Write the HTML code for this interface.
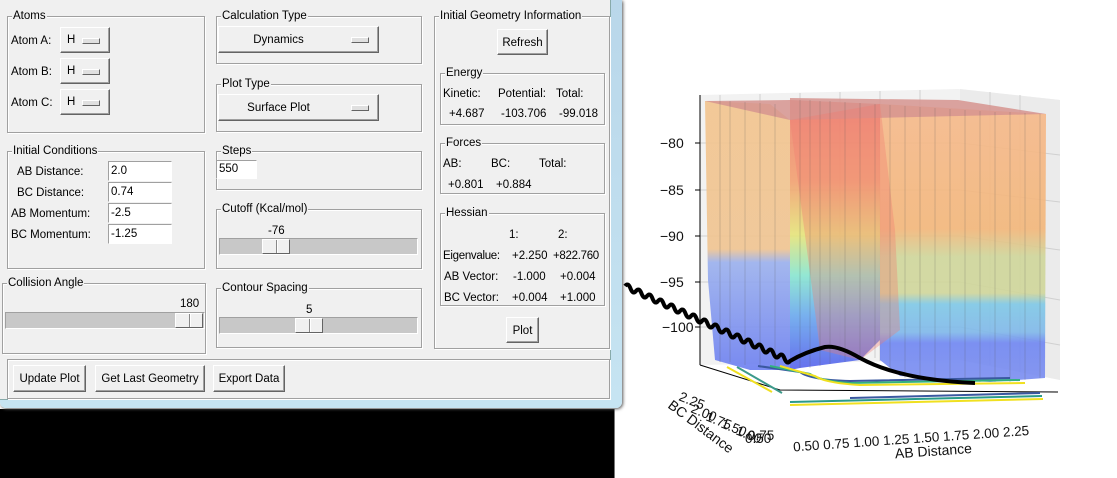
<!DOCTYPE html>
<html><head><meta charset="utf-8"><style>
*{margin:0;padding:0;box-sizing:border-box}
body{width:1117px;height:478px;background:#fff;position:relative;overflow:hidden;font-family:"Liberation Sans",sans-serif;font-size:11.5px;color:#000}
.a{position:absolute;white-space:nowrap;margin-top:2px}
#win{position:absolute;left:0;top:0;width:622px;height:408px;background:linear-gradient(#b9d7ea,#c6e4f2);border-radius:0 0 6px 6px;box-shadow:1px 1px 3px #555}
#client{position:absolute;left:0;top:0;width:611px;height:400px;background:#f0f0f0;border-right:1px solid #8aa;border-bottom:1px solid #8aa}
.g{position:absolute;border:1px solid #a0a0a0;box-shadow:inset 1px 1px 0 #fff,1px 1px 0 #fff}
.gl{position:absolute;top:-7px;left:4px;background:#f0f0f0;padding:0 1px;font-size:11.5px}
.btn{position:absolute;background:#f0f0f0;border:1px solid;border-color:#fff #646464 #646464 #fff;box-shadow:inset -1px -1px 0 #a0a0a0;text-align:center;font-size:11.5px}
.mb::after{content:"";position:absolute;right:9px;top:10px;width:16px;height:4px;border:1px solid;border-color:#fff #646464 #646464 #fff;background:#e0e0e0}
.in{position:absolute;background:#fff;border:1px solid;border-color:#a0a0a0 #fff #fff #a0a0a0;padding:3px 2px 0;font-size:11.5px;height:20px}
.sl{position:absolute;background:#c8c8c8;border:1px solid;border-color:#a0a0a0 #fff #fff #a0a0a0;height:17px}
.th{position:absolute;top:0;height:15px;width:28px;background:#f0f0f0;border:1px solid;border-color:#fff #646464 #646464 #fff}
.th::after{content:"";position:absolute;left:13px;top:0;height:13px;border-left:1px solid #888;border-right:1px solid #fff}
#black{position:absolute;left:0;top:409px;width:615px;height:69px;background:#000;border-right:1px solid #777}
</style></head><body>
<div id="black"></div>
<div id="win"><div id="client">
 <div class="g" style="left:7px;top:16px;width:198px;height:117px"><span class="gl">Atoms</span></div>
 <span class="a" style="left:11px;top:33px">Atom A:</span>
 <span class="a" style="left:11px;top:64px">Atom B:</span>
 <span class="a" style="left:11px;top:95px">Atom C:</span>
 <div class="btn mb" style="left:60px;top:27px;width:50px;height:26px;text-align:left;padding:6px 6px">H</div>
 <div class="btn mb" style="left:60px;top:58px;width:50px;height:26px;text-align:left;padding:6px 6px">H</div>
 <div class="btn mb" style="left:60px;top:89px;width:50px;height:26px;text-align:left;padding:6px 6px">H</div>
 <div class="g" style="left:216px;top:16px;width:206px;height:48px"><span class="gl">Calculation Type</span></div>
 <div class="btn mb" style="left:218px;top:26px;width:161px;height:27px;padding:7px 40px 0 0">Dynamics</div>
 <div class="g" style="left:216px;top:84px;width:206px;height:48px"><span class="gl">Plot Type</span></div>
 <div class="btn mb" style="left:218px;top:94px;width:161px;height:27px;padding:7px 40px 0 0">Surface Plot</div>
 <div class="g" style="left:7px;top:151px;width:198px;height:118px"><span class="gl">Initial Conditions</span></div>
 <span class="a" style="left:17px;top:164px">AB Distance:</span>
 <span class="a" style="left:17px;top:185px">BC Distance:</span>
 <span class="a" style="left:11px;top:206px">AB Momentum:</span>
 <span class="a" style="left:11px;top:227px">BC Momentum:</span>
 <div class="in" style="left:108px;top:161px;width:64px">2.0</div>
 <div class="in" style="left:108px;top:182px;width:64px">0.74</div>
 <div class="in" style="left:108px;top:203px;width:64px">-2.5</div>
 <div class="in" style="left:108px;top:224px;width:64px">-1.25</div>
 <div class="g" style="left:216px;top:151px;width:206px;height:39px"><span class="gl">Steps</span></div>
 <div class="in" style="left:216px;top:160px;width:41px;height:19px;padding-top:2px">550</div>
 <div class="g" style="left:216px;top:209px;width:206px;height:60px"><span class="gl">Cutoff (Kcal/mol)</span></div>
 <span class="a" style="left:268px;top:223px">-76</span>
 <div class="sl" style="left:219px;top:238px;width:199px"><div class="th" style="left:42px"></div></div>
 <div class="g" style="left:2px;top:283px;width:204px;height:71px"><span class="gl">Collision Angle</span></div>
 <span class="a" style="left:180px;top:296px">180</span>
 <div class="sl" style="left:5px;top:312px;width:200px"><div class="th" style="left:169px"></div></div>
 <div class="g" style="left:216px;top:288px;width:206px;height:60px"><span class="gl">Contour Spacing</span></div>
 <span class="a" style="left:306px;top:302px">5</span>
 <div class="sl" style="left:219px;top:317px;width:199px"><div class="th" style="left:75px"></div></div>
 <div class="g" style="left:434px;top:16px;width:176px;height:333px"><span class="gl">Initial Geometry Information</span></div>
 <div class="btn" style="left:497px;top:29px;width:51px;height:26px;padding-top:7px">Refresh</div>
 <div class="g" style="left:440px;top:73px;width:165px;height:52px"><span class="gl">Energy</span></div>
 <span class="a" style="left:443px;top:86px">Kinetic:</span><span class="a" style="left:498px;top:86px">Potential:</span><span class="a" style="left:556px;top:86px">Total:</span>
 <span class="a" style="left:449px;top:106px">+4.687</span><span class="a" style="left:501px;top:106px">-103.706</span><span class="a" style="left:559px;top:106px">-99.018</span>
 <div class="g" style="left:440px;top:143px;width:165px;height:51px"><span class="gl">Forces</span></div>
 <span class="a" style="left:443px;top:156px">AB:</span><span class="a" style="left:491px;top:156px">BC:</span><span class="a" style="left:539px;top:156px">Total:</span>
 <span class="a" style="left:448px;top:177px">+0.801</span><span class="a" style="left:496px;top:177px">+0.884</span>
 <div class="g" style="left:440px;top:213px;width:165px;height:93px"><span class="gl">Hessian</span></div>
 <span class="a" style="left:509px;top:227px">1:</span><span class="a" style="left:558px;top:227px">2:</span>
 <span class="a" style="left:443px;top:248px;letter-spacing:-0.3px">Eigenvalue:</span><span class="a" style="left:512px;top:248px">+2.250</span><span class="a" style="left:553px;top:248px;letter-spacing:-0.3px">+822.760</span>
 <span class="a" style="left:444px;top:269px">AB Vector:</span><span class="a" style="left:513px;top:269px">-1.000</span><span class="a" style="left:560px;top:269px">+0.004</span>
 <span class="a" style="left:444px;top:290px">BC Vector:</span><span class="a" style="left:512px;top:290px">+0.004</span><span class="a" style="left:560px;top:290px">+1.000</span>
 <div class="btn" style="left:506px;top:317px;width:33px;height:26px;padding-top:7px">Plot</div>
 <div class="g" style="left:7px;top:359px;width:603px;height:40px"></div>
 <div class="btn" style="left:13px;top:365px;width:73px;height:27px;padding-top:7px">Update Plot</div>
 <div class="btn" style="left:95px;top:365px;width:110px;height:27px;padding-top:7px">Get Last Geometry</div>
 <div class="btn" style="left:213px;top:365px;width:72px;height:27px;padding-top:7px">Export Data</div>
</div></div>

<svg class="a" style="left:620px;top:80px;margin:0" width="497" height="398" viewBox="620 80 497 398">
 <defs>
  <linearGradient id="lg" x1="0" y1="0" x2="0" y2="1">
   <stop offset="0" stop-color="#f2c48e"/><stop offset="0.55" stop-color="#f0c490"/><stop offset="0.6" stop-color="#9ab0ee"/><stop offset="1" stop-color="#6b7ef0"/></linearGradient>
  <linearGradient id="rg" x1="0" y1="0" x2="0" y2="1">
   <stop offset="0" stop-color="#f6b88a"/><stop offset="0.45" stop-color="#f3b679"/><stop offset="0.55" stop-color="#cfd69a"/><stop offset="0.68" stop-color="#d0d69a"/><stop offset="0.72" stop-color="#7ec8e6"/><stop offset="0.82" stop-color="#7fb8ea"/><stop offset="0.86" stop-color="#6f86f2"/><stop offset="1" stop-color="#7a8df0"/></linearGradient>
  <linearGradient id="mg" x1="0" y1="0" x2="0" y2="1">
   <stop offset="0" stop-color="#ee8070"/><stop offset="0.3" stop-color="#f2a070"/><stop offset="0.5" stop-color="#e6e47a"/><stop offset="0.65" stop-color="#88e6d0"/><stop offset="0.8" stop-color="#6aa8ee"/><stop offset="1" stop-color="#5560ec"/></linearGradient>
 </defs>
 <polygon points="700,95 958,89 1060,100 1060,380 960,360 700,365" fill="#f2f2f2"/>
 <polygon points="960,89 1060,100 1060,380 960,360" fill="#ebebeb"/>
 <g stroke="#d0d0d0" stroke-width="1" fill="none">
  <path d="M700,143H960L1060,155M700,190H960L1060,202M700,236H960L1060,250M700,282H960L1060,300M700,327H960L1060,345"/>
  <path d="M720,95V362M760,94V362M800,93V362M840,92V361M880,91V361M920,90V360M990,92V365M1020,95V372"/>
 </g>
 <polygon points="705,101 770,104 790,120 790,370 750,370 715,360 708,280" fill="url(#lg)" opacity="0.9"/>
 <polygon points="790,100 880,104 880,340 860,360 800,368 790,370" fill="url(#mg)" opacity="0.9"/>
 <polygon points="880,104 1046,114 1045,378 990,382 900,376 880,360" fill="url(#rg)" opacity="0.9"/>
 <polygon points="705,101 790,100 790,98 958,100 1046,114 790,120" fill="#d6948f" opacity="0.85"/>
 <polygon points="790,120 880,104 895,230 900,330 860,360 820,350" fill="#f07a70" opacity="0.35"/>
 <g stroke="#555" stroke-width="0.5" opacity="0.45">
  <path d="M720,101V362M730,101V362M745,102V365M760,103V368M775,104V368M800,100V368M810,100V368M820,101V366M830,101V364M845,102V362M860,103V360M875,104V358M890,105V370M905,106V378M920,107V380M935,108V380M950,109V381M965,110V381M980,111V382M995,112V382M1010,112V382M1025,113V380M1040,114V378"/>
 </g>
 <g stroke="#000" stroke-width="1" fill="none">
  <path d="M700,95V365"/>
  <path d="M695,143h5M695,190h5M695,236h5M695,282h5M695,327h5"/>
  <path d="M700,365L780,390L1058,392"/>
 </g>
 <g fill="none" stroke-width="2">
  <path d="M727,367L772,392" stroke="#f0e020"/>
  <path d="M737,367L782,393" stroke="#3c9a8a"/>
  <path d="M758,366L800,372Q810,380 850,381L1010,378" stroke="#3a58a0"/>
  <path d="M770,366L810,374Q820,381 850,383L1020,380" stroke="#33b080"/>
  <path d="M780,366L815,376Q825,383 860,385L1025,383" stroke="#f0e020"/>
  <path d="M850,398L1040,393" stroke="#3a58a0"/>
  <path d="M790,402L1042,396" stroke="#2a9a8a"/>
  <path d="M790,405L1043,399" stroke="#f0e020"/>
 </g>
 <path d="M625,286 q3,-4 5.5,2.5 q2.5,6.5 5.5,2.5 q3,-4 5.5,2.5 q2.5,6.5 5.5,2.5 q3,-4 5.5,2.5 q2.5,6.5 5.5,2.5 q3,-4 5.5,2.5 q2.5,6.5 5.5,2.5 q3,-4 5.5,2.5 q2.5,6.5 5.5,2.5 q3,-4 5.5,2.5 q2.5,6.5 5.5,2.5 q3,-4 5.5,2.5 q2.5,6.5 5.5,2.5 q3,-4 5.5,2.5 q2.5,6.5 5.5,2.5 q3,-4 5.5,2.5 q2.5,6.5 5.5,2.5 q3,-4 5.5,2.5 q2.5,6.5 5.5,2.5 q3,-4 5.5,2.5 q2.5,6.5 5.5,2.5 q3,-4 5.5,2.5 q2.5,6.5 5.5,2.5 q3,-4 5.5,2.5 q2.5,6.5 5.5,2.5 q3,-4 5.5,2.5 q2.5,6.5 5.5,2.5 q3,-4 5.5,2.5 q2.5,6.5 5.5,2.5 Q805,352 825,347 Q838,345 860,358 Q900,380 975,383" fill="none" stroke="#000" stroke-width="4"/>
 <g font-family="Liberation Sans,sans-serif" font-size="14" fill="#111">
  <text x="660" y="148">−80</text><text x="660" y="195">−85</text><text x="660" y="241">−90</text><text x="660" y="287">−95</text><text x="662" y="332">−100</text>
  <g transform="rotate(-4 900 440)">
   <text x="793" y="444" font-size="13.5">0.50 0.75 1.00 1.25 1.50 1.75 2.00 2.25</text>
   <text x="894" y="458">AB Distance</text>
  </g>
  <text x="678" y="400" font-size="13.5" transform="rotate(22 678 400)">2.25</text>
  <text x="690" y="412" font-size="13.5" transform="rotate(22 690 412)">2.00</text>
  <text x="705" y="420" font-size="13.5" transform="rotate(22 705 420)">1.75</text>
  <text x="720" y="427" font-size="13.5" transform="rotate(22 720 427)">1.50</text>
  <text x="735" y="434" font-size="13.5" transform="rotate(22 735 434)">1.00</text>
  <text x="748" y="440" font-size="13.5">0.75</text>
  <text x="745" y="443" font-size="13.5">0.50</text>
  <text x="667" y="407" transform="rotate(37 667 407)">BC Distance</text>
 </g>
</svg>
</body></html>
